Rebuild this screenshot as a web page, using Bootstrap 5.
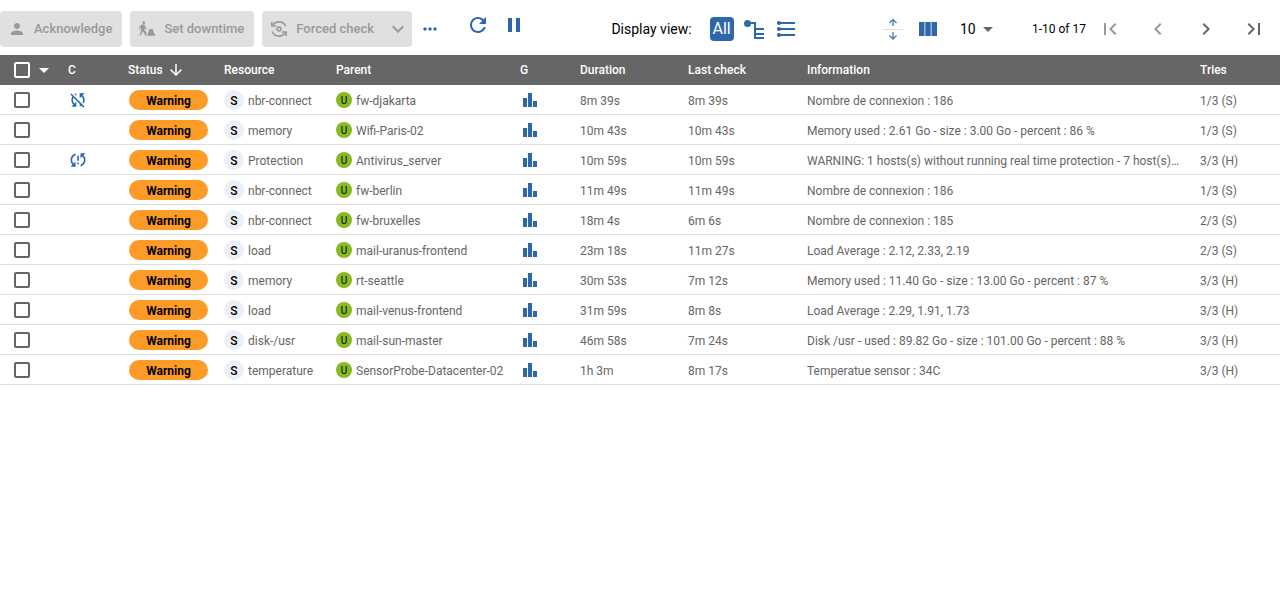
<!DOCTYPE html>
<html lang="en">
<head>
<meta charset="utf-8">
<meta name="viewport" content="width=device-width, initial-scale=1">
<title>Resources status</title>
<link href="https://cdn.jsdelivr.net/npm/bootstrap@5.3.0/dist/css/bootstrap.min.css" rel="stylesheet">
<style>
  :root { --brand: #2e68aa; --ink: #666; }
  body { font-family: Roboto, sans-serif; font-size: 14px; color: #000; background: #fff; }
  svg { display: block; fill: currentColor; flex: none; }
  .toolbar { height: 55px; padding: 3px 2px 0 0; }
  .action { height: 36px; padding: 0 10px 0 8px; gap: 8px; font-size: 13px; font-weight: 500; border: 0; border-radius: 4px; }
  .action:disabled { background: #e0e0e0; color: #999; opacity: 1; }
  .action.split { padding-right: 2px; }
  .tool { border: 0; padding: 0; background: none; color: var(--brand); }
  .raised { gap: 12px; margin-bottom: 8px; padding-left: 26px; }
  .views { gap: 18px; }
  .options { gap: 13px; }
  .view-all { width: 24px; height: 24px; border-radius: 4px; background: var(--brand); color: #fff; font-size: 16px; line-height: 24px; }
  .pager { width: 48px; height: 48px; display: grid; place-items: center; color: var(--ink); }
  .pager:disabled { color: #999; }
  .per-page { appearance: none; border: 0; background: none; width: 40px; padding: 0; font-size: 14px; color: #000; }
  .caret { pointer-events: none; margin-left: -24px; color: var(--ink); }
  .range { font-size: 12px; }
  .listing { table-layout: fixed; width: 100%; border-collapse: separate; border-spacing: 0; font-size: 12px; line-height: 16px; color: var(--ink); }
  .listing th { background: #666; color: #fff; font-weight: 500; height: 30px; padding: 0 8px; }
  .listing td { height: 30px; padding: 1px 8px 0; border-bottom: 1px solid #e0e0e0; }
  .listing .pick { padding: 0 0 0 14px; }
  .tick { appearance: none; display: block; width: 16px; height: 16px; margin: 0; border: 2px solid var(--ink); border-radius: 2px; }
  th .tick { border-color: #fff; }
  .tick:checked { background: var(--brand); }
  .status { display: block; width: 79px; height: 20px; margin-left: 1px; border-radius: 10px; background: #fd9b27; color: #000; font-weight: 700; line-height: 22px; text-align: center; }
  .kind { flex: none; border-radius: 50%; color: #000; text-align: center; font-weight: 500; }
  .kind-s { width: 20px; height: 20px; background: #ebeff7; font-size: 12px; line-height: 22px; }
  .kind-u { width: 16px; height: 16px; background: #88b922; font-size: 10px; font-weight: 400; line-height: 17px; }
  .label-text { padding-top: 1px; white-space: nowrap; }
  .blue { color: var(--brand); }
  .c-pick, .c-c, .c-g { width: 60px; } .c-status { width: 96px; } .c-res { width: 112px; } .c-parent { width: 184px; }
  .c-dur { width: 108px; } .c-last { width: 119px; } .c-tries { width: 88px; }
</style>
</head>
<body>
<svg class="d-none" aria-hidden="true">
  <symbol id="graph" viewBox="0 0 20 20"><path d="M3 8h4v9H3zM8 3h4v14H8zM13 11h4v6h-4z"/></symbol>
  <symbol id="sync-off" viewBox="0 0 24 24"><path d="M10 6.35V4.26c-.8.21-1.55.54-2.23.96l1.46 1.46c.25-.12.5-.24.77-.33zm-7.14-.94 2.36 2.36C4.45 8.99 4 10.44 4 12c0 2.21.91 4.2 2.36 5.64L4 20h6v-6l-2.24 2.24C6.68 15.15 6 13.66 6 12c0-1 .25-1.94.68-2.77l8.08 8.08c-.25.13-.5.25-.77.34v2.09c.8-.21 1.55-.54 2.23-.96l2.36 2.36 1.27-1.27L4.14 4.14 2.86 5.41zM20 4h-6v6l2.24-2.24C17.32 8.85 18 10.34 18 12c0 1-.25 1.94-.68 2.77l1.46 1.46C19.55 15.01 20 13.56 20 12c0-2.21-.91-4.2-2.36-5.64L20 4z"/></symbol>
  <symbol id="sync-problem" viewBox="0 0 24 24"><path d="M3 12c0 2.21.91 4.2 2.36 5.64L3 20h6v-6l-2.24 2.24C5.68 15.15 5 13.66 5 12c0-2.61 1.67-4.83 4-5.65V4.26C5.55 5.15 3 8.27 3 12zm8 5h2v-2h-2v2zM21 4h-6v6l2.24-2.24C18.32 8.85 19 10.34 19 12c0 2.61-1.67 4.83-4 5.65v2.09c3.45-.89 6-4.01 6-7.74 0-2.21-.91-4.2-2.36-5.64L21 4zm-10 9h2V7h-2v6z"/></symbol>
</svg>

<header class="toolbar d-flex align-items-center justify-content-between">
  <div class="d-flex align-items-center">
    <div class="d-flex gap-2">
      <button class="btn action d-flex align-items-center" disabled>
        <svg width="18" height="18" viewBox="0 0 24 24"><path d="M12 12c2.210 0 4-1.790 4-4s-1.790-4-4-4-4 1.790-4 4 1.790 4 4 4zm0 2c-2.670 0-8 1.340-8 4v2h16v-2c0-2.660-5.330-4-8-4z"/></svg>
        <span>Acknowledge</span>
      </button>
      <button class="btn action d-flex align-items-center" disabled>
        <svg width="18" height="18" viewBox="0 0 18 18"><circle cx="5.700" cy="2.700" r="1.400"/><path d="M3.500 4.500h3l1.200 3 1.300 1.200-.6.900-1.900-1.300-.2 1.900 1.400 1.900.6 3.700H7L6.200 13l-1.700-1.700-.6 2.200-1.500 2.300-1.100-.5 1.300-2.600.5-5.500-1 .8-.6 1.700-.9-.4.8-2.200z"/><path d="M2.500 7 9.200 13.500" stroke="currentColor" stroke-width=".8" fill="none"/><path d="M8.800 15.800 10.200 13l.9-3.400 1-.6h2.100l.9.800.7 3 1.200 1.200V15.800z"/></svg>
        <span>Set downtime</span>
      </button>
      <button class="btn action split d-flex align-items-center" disabled>
        <svg width="18" height="18" viewBox="0 0 18 18"><g fill="none" stroke="currentColor" stroke-width="1.600"><path d="M2.500 5.200C4.200 2.800 6.500 1.900 9 1.900c3.200 0 5.700 1.800 6.700 4.600"/><path d="M1.800 2v4h4.500"/><path d="M15.500 12.800c-1.700 2.400-4 3.300-6.500 3.300-3.200 0-5.700-1.800-6.700-4.600"/><path d="M16.200 16v-4h-4.500"/><circle cx="9" cy="9" r="1.900"/></g></svg>
        <span>Forced check</span>
        <svg class="ms-1" width="24" height="24" viewBox="0 0 24 24"><path d="M16.590 8.590 12 13.170 7.410 8.590 6 10l6 6 6-6z"/></svg>
      </button>
    </div>
    <button class="tool ms-2" aria-label="More actions"><svg width="20" height="20" viewBox="0 0 24 24"><path d="M6 10c-1.100 0-2 .9-2 2s.9 2 2 2 2-.9 2-2-.9-2-2-2zm12 0c-1.100 0-2 .9-2 2s.9 2 2 2 2-.9 2-2-.9-2-2-2zm-6 0c-1.100 0-2 .9-2 2s.9 2 2 2 2-.9 2-2-.9-2-2-2z"/></svg></button>
    <div class="d-flex raised">
      <button class="tool" aria-label="Refresh"><svg width="24" height="24" viewBox="0 0 24 24"><path d="M17.650 6.350C16.200 4.900 14.210 4 12 4c-4.420 0-7.990 3.580-7.990 8s3.570 8 7.990 8c3.730 0 6.840-2.550 7.730-6h-2.080c-.82 2.330-3.040 4-5.650 4-3.310 0-6-2.690-6-6s2.690-6 6-6c1.660 0 3.140.69 4.220 1.780L13 11h7V4l-2.350 2.350z"/></svg></button>
      <button class="tool" aria-label="Pause"><svg width="24" height="24" viewBox="0 0 24 24"><path d="M6 19h4V5H6v14zm8-14v14h4V5h-4z"/></svg></button>
    </div>
  </div>

  <div class="d-flex align-items-center views">
    <span>Display view:</span>
    <div class="d-flex gap-2 align-items-center">
      <button class="tool view-all">All</button>
      <button class="tool" aria-label="View by host"><svg width="24" height="24" viewBox="0 0 24 24"><circle cx="5.500" cy="6.500" r="3.500"/><path d="M6 5h8v6h8v2h-8v3h8v2h-8v2h8v2H12V7H6z"/></svg></button>
      <button class="tool" aria-label="View by service"><svg width="24" height="24" viewBox="0 0 24 24"><path d="M3 5h18v2H3zM3 11h18v2H3zM3 17h18v2H3z"/><circle cx="5" cy="6" r="2"/><circle cx="5" cy="12" r="2"/><circle cx="5" cy="18" r="2"/></svg></button>
    </div>
  </div>

  <div class="d-flex align-items-center">
    <div class="d-flex align-items-center options me-3 pe-1">
      <button class="tool" aria-label="Row density"><svg width="20" height="24" viewBox="0 0 20 24"><path d="M0 12h20v1H0z" fill="#e0e0e0"/><path d="M10 9V3M6.500 6 10 2.500 13.500 6M10 15v6M6.500 18.500 10 22l3.500-3.500" fill="none" stroke="#4c82bd" stroke-width="1.400"/></svg></button>
      <button class="tool" aria-label="Columns"><svg width="24" height="24" viewBox="0 0 24 24"><path d="M3 5h5.500v14H3zM9.300 5h5.400v14H9.300zM15.500 5H21v14h-5.500z"/></svg></button>
    </div>
    <label class="d-flex align-items-center me-3">
      <select class="per-page" aria-label="Rows per page"><option>10</option><option>20</option></select>
      <svg class="caret" width="24" height="24" viewBox="0 0 24 24"><path d="m7 10 5 5 5-5z"/></svg>
    </label>
    <span class="range ms-3">1-10 of 17</span>
    <nav class="d-flex" aria-label="Pages">
      <button class="tool pager" disabled aria-label="First page"><svg width="24" height="24" viewBox="0 0 24 24"><path d="M18.410 16.590 13.820 12l4.590-4.590L17 6l-6 6 6 6zM6 6h2v12H6z"/></svg></button>
      <button class="tool pager" disabled aria-label="Previous page"><svg width="24" height="24" viewBox="0 0 24 24"><path d="M15.410 7.410 14 6l-6 6 6 6 1.410-1.410L10.830 12z"/></svg></button>
      <button class="tool pager" aria-label="Next page"><svg width="24" height="24" viewBox="0 0 24 24"><path d="M10 6 8.590 7.410 13.170 12l-4.580 4.590L10 18l6-6z"/></svg></button>
      <button class="tool pager" aria-label="Last page"><svg width="24" height="24" viewBox="0 0 24 24"><path d="M5.590 7.410 10.180 12l-4.590 4.590L7 18l6-6-6-6zM16 6h2v12h-2z"/></svg></button>
    </nav>
  </div>
</header>

<table class="listing">
  <colgroup><col class="c-pick"><col class="c-c"><col class="c-status"><col class="c-res"><col class="c-parent"><col class="c-g"><col class="c-dur"><col class="c-last"><col><col class="c-tries"></colgroup>
  <thead>
    <tr>
      <th class="pick"><div class="d-flex align-items-center"><input type="checkbox" class="tick" aria-label="Select all"><svg class="ms-1" width="20" height="24" viewBox="2 0 20 24"><path d="m7 10 5 5 5-5z"/></svg></div></th>
      <th>C</th>
      <th><div class="d-flex align-items-center gap-1">Status <svg width="18" height="18" viewBox="0 0 24 24"><path d="m20 12-1.410-1.410L13 16.170V4h-2v12.170l-5.580-5.590L4 12l8 8z"/></svg></div></th>
      <th>Resource</th><th>Parent</th><th>G</th><th>Duration</th><th>Last check</th><th>Information</th><th>Tries</th>
    </tr>
  </thead>
  <tbody id="rows"></tbody>
</table>

<script>
  const resources = [
    ['sync-off', 'nbr-connect', 'fw-djakarta', '8m 39s', '8m 39s', 'Nombre de connexion : 186', '1/3 (S)'],
    ['', 'memory', 'Wifi-Paris-02', '10m 43s', '10m 43s', 'Memory used : 2.61 Go - size : 3.00 Go - percent : 86 %', '1/3 (S)'],
    ['sync-problem', 'Protection', 'Antivirus_server', '10m 59s', '10m 59s', 'WARNING: 1 hosts(s) without running real time protection - 7 host(s)…', '3/3 (H)'],
    ['', 'nbr-connect', 'fw-berlin', '11m 49s', '11m 49s', 'Nombre de connexion : 186', '1/3 (S)'],
    ['', 'nbr-connect', 'fw-bruxelles', '18m 4s', '6m 6s', 'Nombre de connexion : 185', '2/3 (S)'],
    ['', 'load', 'mail-uranus-frontend', '23m 18s', '11m 27s', 'Load Average : 2.12, 2.33, 2.19', '2/3 (S)'],
    ['', 'memory', 'rt-seattle', '30m 53s', '7m 12s', 'Memory used : 11.40 Go - size : 13.00 Go - percent : 87 %', '3/3 (H)'],
    ['', 'load', 'mail-venus-frontend', '31m 59s', '8m 8s', 'Load Average : 2.29, 1.91, 1.73', '3/3 (H)'],
    ['', 'disk-/usr', 'mail-sun-master', '46m 58s', '7m 24s', 'Disk /usr - used : 89.82 Go - size : 101.00 Go - percent : 88 %', '3/3 (H)'],
    ['', 'temperature', 'SensorProbe-Datacenter-02', '1h 3m', '8m 17s', 'Temperatue sensor : 34C', '3/3 (H)']
  ];
  document.getElementById('rows').innerHTML = resources.map(([check, name, parent, duration, last, info, tries]) => `
    <tr>
      <td class="pick"><input type="checkbox" class="tick" aria-label="Select ${name} on ${parent}"></td>
      <td class="blue">${check ? `<svg width="20" height="20"><use href="#${check}"/></svg>` : ''}</td>
      <td><span class="status">Warning</span></td>
      <td><div class="d-flex align-items-center gap-1"><span class="kind kind-s">S</span><span class="label-text">${name}</span></div></td>
      <td><div class="d-flex align-items-center gap-1"><span class="kind kind-u">U</span><span class="label-text">${parent}</span></div></td>
      <td class="blue"><svg width="20" height="20"><use href="#graph"/></svg></td>
      <td><div class="label-text">${duration}</div></td>
      <td><div class="label-text">${last}</div></td>
      <td><div class="label-text text-truncate">${info}</div></td>
      <td><div class="label-text">${tries}</div></td>
    </tr>`).join('');
</script>
<script src="https://cdn.jsdelivr.net/npm/bootstrap@5.3.0/dist/js/bootstrap.bundle.min.js"></script>
</body>
</html>
